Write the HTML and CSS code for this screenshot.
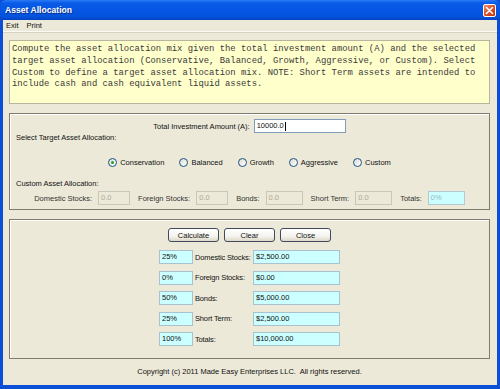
FILE: index.html
```html
<!DOCTYPE html>
<html lang="en">
<head>
    <meta charset="UTF-8">
    <title>Asset Allocation</title>
    <link rel="stylesheet" href="styles.css">
</head>
<body>
    <div class="window">
        <div class="titlebar">
            <span class="title">Asset Allocation</span>
            <span class="close-btn">
                <svg width="9" height="9" viewBox="0 0 9 9"><path d="M1.5 1.5 L7.5 7.5 M7.5 1.5 L1.5 7.5" stroke="#fff" stroke-width="1.6" stroke-linecap="round"/></svg>
            </span>
        </div>
        <div class="frame">
            <div class="menubar">
                <span>Exit</span>
                <span>Print</span>
            </div>

            <div class="content">
                <div class="description">
                    Compute the asset allocation mix given the total investment amount (A) and the selected<br>
                    target asset allocation (Conservative, Balanced, Growth, Aggressive, or Custom). Select<br>
                    Custom to define a target asset allocation mix. NOTE: Short Term assets are intended to<br>
                    include cash and cash equivalent liquid assets.
                </div>

                <div class="panel panel-input">
                    <div class="amount-row">
                        <label>Total Investment Amount (A):</label>
                        <div class="field amount">10000.0<span class="caret"></span></div>
                    </div>
                    <div class="section-label">Select Target Asset Allocation:</div>
                    <div class="radio-row">
                        <span class="radio checked"><i></i>Conservation</span>
                        <span class="radio"><i></i>Balanced</span>
                        <span class="radio"><i></i>Growth</span>
                        <span class="radio"><i></i>Aggressive</span>
                        <span class="radio"><i></i>Custom</span>
                    </div>
                    <div class="section-label custom-label">Custom Asset Allocation:</div>
                    <div class="custom-row">
                        <label>Domestic Stocks:</label>
                        <div class="field disabled">0.0</div>
                        <label>Foreign Stocks:</label>
                        <div class="field disabled">0.0</div>
                        <label>Bonds:</label>
                        <div class="field disabled wide">0.0</div>
                        <label>Short Term:</label>
                        <div class="field disabled wide">0.0</div>
                        <label>Totals:</label>
                        <div class="field total wide">0%</div>
                    </div>
                </div>

                <div class="panel panel-result">
                    <div class="buttons">
                        <button>Calculate</button>
                        <button>Clear</button>
                        <button>Close</button>
                    </div>
                    <div class="results">
                        <div class="field out">25%</div>
                        <span class="res-label">Domestic Stocks:</span>
                        <div class="field out">$2,500.00</div>

                        <div class="field out">0%</div>
                        <span class="res-label">Foreign Stocks:</span>
                        <div class="field out">$0.00</div>

                        <div class="field out">50%</div>
                        <span class="res-label">Bonds:</span>
                        <div class="field out">$5,000.00</div>

                        <div class="field out">25%</div>
                        <span class="res-label">Short Term:</span>
                        <div class="field out">$2,500.00</div>

                        <div class="field out">100%</div>
                        <span class="res-label">Totals:</span>
                        <div class="field out">$10,000.00</div>
                    </div>
                </div>

                <div class="footer">Copyright (c) 2011 Made Easy Enterprises LLC.&nbsp; All rights reserved.</div>
            </div>
        </div>
    </div>
</body>
</html>
```

FILE: styles.css
```css
html, body {
    margin: 0;
    padding: 0;
}

body {
    font-family: "Liberation Sans", Arial, sans-serif;
    font-size: 7.5px;
    color: #111;
    background-color: #0a4fd6;
}

.window {
    width: 500px;
    height: 389px;
    display: flex;
    flex-direction: column;
}

/* title bar */
.titlebar {
    height: 20px;
    display: flex;
    align-items: center;
    justify-content: space-between;
    padding: 0 4px 0 5px;
    box-sizing: border-box;
    border-radius: 6px 6px 0 0;
    background: linear-gradient(#2a7bf6 0%, #0a5be6 15%, #0556e4 50%, #0452dc 85%, #0640c0 100%);
}

.title {
    color: #fff;
    font-weight: bold;
    font-size: 8.6px;
    text-shadow: 1px 1px 0 #0a2e8a;
}

.close-btn {
    width: 13px;
    height: 13px;
    box-sizing: border-box;
    border: 1px solid #fff;
    border-radius: 2px;
    background: linear-gradient(135deg, #f08a6a, #d8461e 60%, #c23a14);
    display: flex;
    align-items: center;
    justify-content: center;
}

.frame {
    flex: 1;
    display: flex;
    flex-direction: column;
    background-color: #ece9d8;
    border-left: 3px solid #0a4fd6;
    border-right: 3px solid #0a4fd6;
    border-bottom: 4px solid #0a4fd6;
}

.menubar {
    height: 11px;
    display: flex;
    align-items: center;
    gap: 8px;
    padding-left: 3px;
    border-bottom: 1px solid #fbfaf5;
    box-shadow: 0 1px 0 #d6d3c2;
}

.content {
    flex: 1;
    display: flex;
    flex-direction: column;
    padding: 8px 7px 0 6px;
}

.description {
    height: 64px;
    box-sizing: border-box;
    padding: 3px 2px;
    background-color: #ffffcc;
    border: 1px solid #b8b59f;
    font-family: "Liberation Mono", "Courier New", monospace;
    font-size: 8.9px;
    line-height: 11.8px;
    color: #3a3a3a;
    margin-bottom: 9px;
}

.panel {
    border: 1px solid #7e7c6e;
    box-shadow: inset 1px 1px 0 #fff;
    box-sizing: border-box;
}

/* top panel */
.panel-input {
    height: 97px;
    padding: 5px 6px 0 6px;
    margin-bottom: 9px;
}

.amount-row {
    display: flex;
    justify-content: center;
    align-items: center;
    gap: 4px;
    height: 14px;
}

.section-label {
    line-height: 10px;
}

.custom-label {
    margin-top: 11px;
}

.radio-row {
    display: flex;
    justify-content: center;
    gap: 15px;
    height: 12px;
    align-items: center;
    margin-top: 13px;
}

.radio {
    display: flex;
    align-items: center;
    gap: 3px;
}

.radio i {
    width: 9px;
    height: 9px;
    box-sizing: border-box;
    border: 1px solid #1d5281;
    border-radius: 50%;
    background: linear-gradient(135deg, #dcdcd4, #fff);
    display: flex;
    align-items: center;
    justify-content: center;
}

.radio.checked i::after {
    content: "";
    width: 3px;
    height: 3px;
    border-radius: 50%;
    background-color: #21a121;
}

.custom-row {
    display: flex;
    justify-content: center;
    align-items: center;
    height: 14px;
    margin-top: 2px;
}

.custom-row label {
    margin-right: 6px;
    color: #333;
    white-space: nowrap;
}

.custom-row .field {
    margin-right: 8px;
}

.custom-row .field:last-child {
    margin-right: 0;
}

/* fields */
.field {
    height: 14px;
    box-sizing: border-box;
    border: 1px solid #7f9db9;
    background-color: #fff;
    padding: 0 2px;
    line-height: 12px;
    white-space: nowrap;
}

.field.amount {
    width: 92px;
    display: flex;
    align-items: center;
}

.caret {
    width: 1px;
    height: 9px;
    background-color: #000;
    margin-left: 1px;
}

.field.disabled {
    width: 32px;
    background-color: #ece9d8;
    border-color: #c9c7ba;
    color: #aca899;
}

.field.wide {
    width: 37px;
}

.field.total {
    background-color: #ccffff;
    border-color: #b5c8d6;
    color: #9bb;
}

/* bottom panel */
.panel-result {
    height: 140px;
    padding-top: 8px;
    display: flex;
    flex-direction: column;
    align-items: center;
}

.buttons {
    display: flex;
    gap: 5px;
    margin-bottom: 8px;
}

.buttons button {
    width: 51px;
    height: 14px;
    padding: 0;
    font-family: "Liberation Sans", Arial, sans-serif;
    font-size: 7.5px;
    color: #111;
    border: 1px solid #3f4b5c;
    border-radius: 3px;
    background: linear-gradient(#fff 0%, #f4f3ee 60%, #dcd8c8 100%);
}

.results {
    display: grid;
    grid-template-columns: 34px 60px 87px;
    grid-auto-rows: 14px;
    row-gap: 6.5px;
    align-items: center;
}

.res-label {
    padding-left: 2px;
    white-space: nowrap;
    letter-spacing: -0.15px;
}

.field.out {
    background-color: #ccffff;
    border-color: #a9c2d2;
}

.footer {
    flex: 1;
    display: flex;
    align-items: center;
    justify-content: center;
    padding-bottom: 2px;
}
```
